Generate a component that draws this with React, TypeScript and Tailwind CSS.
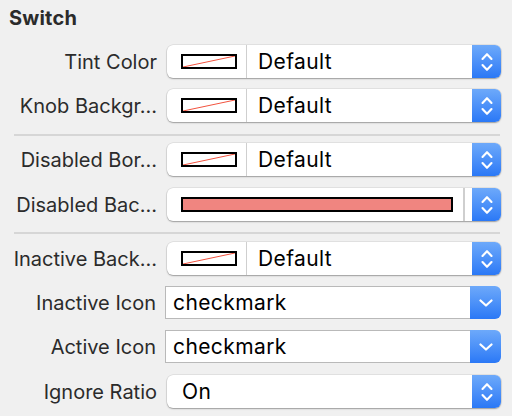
import React from "react";

const Stepper: React.FC = () => (
  <svg width="12" height="20" viewBox="0 0 12 20" fill="none">
    <path
      d="M1.5 7 L6 2.2 L10.5 7 M1.5 13 L6 17.8 L10.5 13"
      stroke="white"
      strokeWidth="2.1"
      strokeLinecap="round"
      strokeLinejoin="round"
    />
  </svg>
);

const ChevronDown: React.FC = () => (
  <svg width="14" height="8" viewBox="0 0 14 8" fill="none">
    <path
      d="M1.5 1.5 L7 6.5 L12.5 1.5"
      stroke="white"
      strokeWidth="2.2"
      strokeLinecap="round"
      strokeLinejoin="round"
    />
  </svg>
);

const NoColor: React.FC = () => (
  <div className="w-[56px] h-[15px] border-2 border-black bg-white">
    <svg width="52" height="11" viewBox="0 0 52 11" className="block">
      <line x1="0" y1="11" x2="52" y2="0" stroke="#f2533f" strokeWidth="1" />
    </svg>
  </div>
);

const BlueButton: React.FC<{ children: React.ReactNode }> = ({ children }) => (
  <div className="w-[29px] h-full flex items-center justify-center rounded-r-[6px] bg-linear-to-b from-[#6da9fa] to-[#2a78f6]">
    {children}
  </div>
);

const Row: React.FC<{ label: string; className?: string; children: React.ReactNode }> = ({
  label,
  className = "",
  children,
}) => (
  <div className={`flex items-center h-[33px] ${className}`}>
    <div className="w-[157px] text-right text-[20px] text-[#2b2b2b] whitespace-nowrap">{label}</div>
    <div className="ml-[10px] h-full flex-1 pr-[11px] flex">{children}</div>
  </div>
);

const Value: React.FC<{ children: React.ReactNode; className?: string }> = ({ children, className = "" }) => (
  <div className={`flex-1 flex items-center text-[21px] tracking-[0.4px] text-black ${className}`}>{children}</div>
);

const ColorWell: React.FC = () => (
  <div className="flex h-full w-[334px] rounded-[6px] bg-white shadow-[0_0_0_0.5px_rgba(0,0,0,0.12),0_1px_1.5px_rgba(0,0,0,0.3)]">
    <div className="w-[80px] flex items-center pl-[14px] border-r border-[#cfcfcf]">
      <NoColor />
    </div>
    <Value className="pl-[11px]">Default</Value>
    <BlueButton>
      <Stepper />
    </BlueButton>
  </div>
);

const Separator: React.FC<{ className?: string }> = ({ className = "" }) => (
  <div className={`ml-[14px] w-[486px] h-[2px] bg-[#d6d6d6] ${className}`} />
);

const Combo: React.FC<{ value: string }> = ({ value }) => (
  <div className="flex h-full w-[336px] -ml-[1px]">
    <Value className="pl-[7px] bg-white border border-r-0 border-[#b9b9b9]">{value}</Value>
    <div className="w-[31px] h-full rounded-r-[6px] flex items-center justify-center bg-linear-to-b from-[#6da9fa] to-[#2a78f6]">
      <ChevronDown />
    </div>
  </div>
);

export default function App() {
  return (
    <div
      className="w-[512px] h-[416px] bg-[#f0f0f0] overflow-hidden"
      style={{ fontFamily: "Inter, 'Liberation Sans', sans-serif" }}
    >
      <div className="h-[45px] pl-[9px] pt-[6px] text-[20px] leading-[25px] font-bold tracking-[0.2px] text-[#2b2b2b]">
        Switch
      </div>

      <Row label="Tint Color">
        <ColorWell />
      </Row>
      <Row label="Knob Backgr…" className="mt-[11px]">
        <ColorWell />
      </Row>

      <Separator className="mt-[12px] mb-[7px]" />

      <Row label="Disabled Bor…">
        <ColorWell />
      </Row>
      <Row label="Disabled Bac…" className="mt-[12px]">
        <div className="flex h-full w-[334px] rounded-[6px] bg-white shadow-[0_0_0_0.5px_rgba(0,0,0,0.12),0_1px_1.5px_rgba(0,0,0,0.3)]">
          <div className="flex-1 flex items-center pl-[14px] pr-[10px] border-r-2 border-[#cfcfcf]">
            <div className="w-full h-[15px] border-2 border-black bg-[#f08580]" />
          </div>
          <div className="w-[7px]" />
          <BlueButton>
            <Stepper />
          </BlueButton>
        </div>
      </Row>

      <Separator className="mt-[11px] mb-[8px]" />

      <Row label="Inactive Back…">
        <ColorWell />
      </Row>
      <Row label="Inactive Icon" className="mt-[11px]">
        <Combo value="checkmark" />
      </Row>
      <Row label="Active Icon" className="mt-[11px]">
        <Combo value="checkmark" />
      </Row>
      <Row label="Ignore Ratio" className="mt-[12px]">
        <div className="flex h-full w-[334px] rounded-[6px] bg-white shadow-[0_0_0_0.5px_rgba(0,0,0,0.12),0_1px_1.5px_rgba(0,0,0,0.3)]">
          <Value className="pl-[15px]">On</Value>
          <BlueButton>
            <Stepper />
          </BlueButton>
        </div>
      </Row>
    </div>
  );
}
